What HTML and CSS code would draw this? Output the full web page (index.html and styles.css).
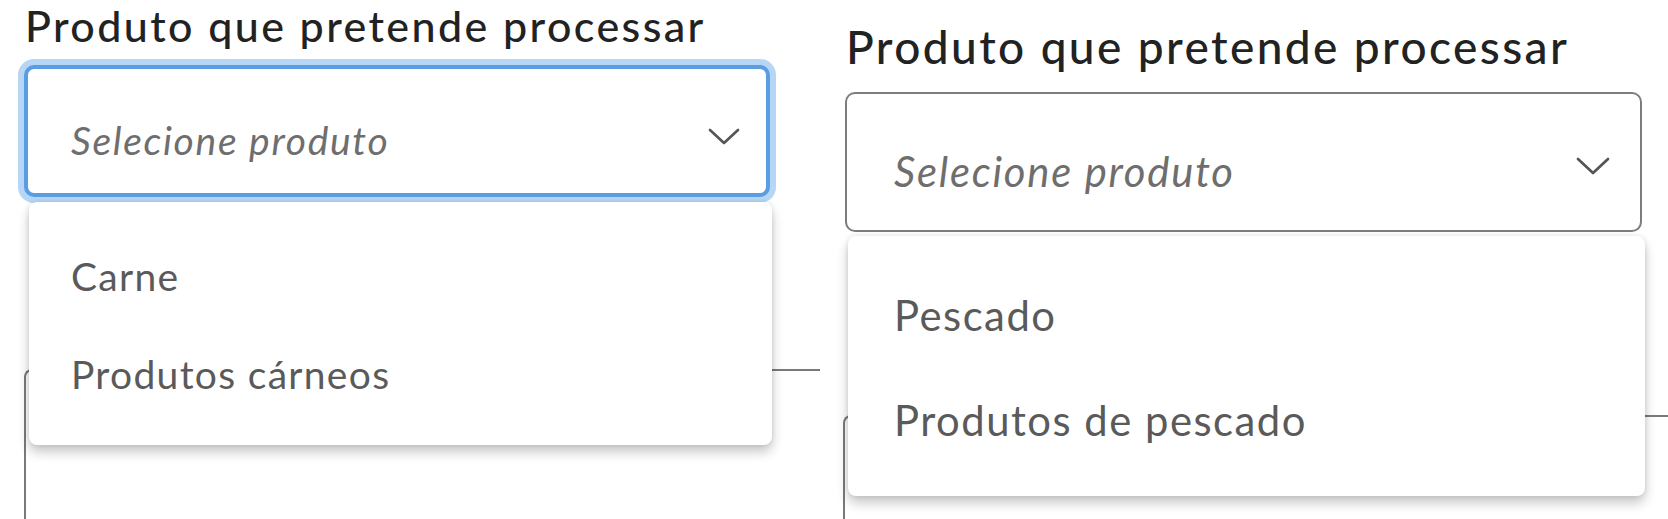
FILE: index.html
```html
<!DOCTYPE html>
<html lang="pt">
<head>
<meta charset="utf-8">
<title>Produto</title>
<link rel="stylesheet" href="styles.css">
</head>
<body>
<div class="page">
  <section class="panel panel-a">
    <h2 class="label">Produto que pretende processar</h2>
    <div class="select-wrap">
      <div class="select focused">
        <span class="placeholder">Selecione produto</span>
        <svg class="chev" viewBox="0 0 32 17" width="32" height="17"><polyline points="2,2 16,15 30,2" fill="none" stroke="#555" stroke-width="2.6" stroke-linecap="round" stroke-linejoin="round"/></svg>
      </div>
      <ul class="menu">
        <li class="item">Carne</li>
        <li class="item">Produtos cárneos</li>
      </ul>
    </div>
    <div class="field"></div>
  </section>
  <section class="panel panel-b">
    <h2 class="label">Produto que pretende processar</h2>
    <div class="select-wrap">
      <div class="select">
        <span class="placeholder">Selecione produto</span>
        <svg class="chev" viewBox="0 0 34 18" width="34" height="18"><polyline points="2,2 17,16 32,2" fill="none" stroke="#555" stroke-width="2.7" stroke-linecap="round" stroke-linejoin="round"/></svg>
      </div>
      <ul class="menu">
        <li class="item">Pescado</li>
        <li class="item">Produtos de pescado</li>
      </ul>
    </div>
    <div class="field"></div>
  </section>
</div>
</body>
</html>
```
FILE: styles.css
```css
* { box-sizing: border-box; }
html, body { margin: 0; padding: 0; background: #fff; }
body { font-family: Lato, "Open Sans", sans-serif; }
.page { display: flex; width: 1668px; height: 519px; overflow: hidden; }
.panel { height: 519px; overflow: hidden; }
.label { margin: 0; color: #222; font-weight: 500; white-space: nowrap; }
.select-wrap { position: relative; }
.select {
  display: flex; align-items: center; background: #fff;
}
.placeholder { flex: 1; font-style: italic; color: #6e6e6e; white-space: nowrap; }
.chev { flex: none; display: block; }
.menu {
  position: absolute; z-index: 2; margin: 0; list-style: none;
  background: #fff; border-radius: 8px;
  box-shadow: 0 7px 12px rgba(0,0,0,0.22), 0 0 5px rgba(0,0,0,0.10);
}
.item { color: #5a5a5a; white-space: nowrap; }
.field { border-top: 2px solid #7a7a7a; border-left: 2px solid #7a7a7a; border-top-left-radius: 8px; height: 300px; width: 1000px; }

/* panel A */
.panel-a { width: 820px; padding-left: 24px; }
.panel-a .label { font-size: 43px; line-height: 52px; padding-left: 1px; letter-spacing: 2.4px; }
.panel-a .select-wrap { margin-top: 13px; }
.panel-a .select {
  width: 746px; height: 132px; border: 4px solid #5b9de3; border-radius: 10px;
  box-shadow: 0 0 0 6px #b7d6f6; padding: 0 26px 0 43px;
}
.panel-a .placeholder { font-size: 39px; margin-top: 18px; letter-spacing: 1.7px; }
.panel-a .chev { margin-top: 10px; }
.panel-a .menu { top: calc(100% + 5px); left: 5px; width: 743px; height: 243px; padding: 25px 0 22px; }
.panel-a .item { height: 98px; line-height: 98px; padding-left: 42px; font-size: 39px; letter-spacing: 1.3px; }
.panel-a .field { margin-top: 172px; }

/* panel B */
.panel-b { flex: 1; padding-left: 25px; padding-top: 21px; }
.panel-b .label { font-size: 46px; line-height: 51px; padding-left: 1px; letter-spacing: 2.4px; }
.panel-b .select-wrap { margin-top: 20px; }
.panel-b .select {
  width: 797px; height: 140px; border: 2px solid #7d7d7d; border-radius: 10px;
  padding: 0 30px 0 47px;
}
.panel-b .placeholder { font-size: 41.8px; margin-top: 18px; letter-spacing: 1.8px; }
.panel-b .chev { margin-top: 8px; }
.panel-b .menu { top: calc(100% + 4px); left: 3px; width: 797px; height: 260px; padding: 27px 0 23px; }
.panel-b .item { height: 105px; line-height: 105px; padding-left: 46px; font-size: 41.8px; letter-spacing: 1.5px; }
.panel-b .field { margin-top: 183px; margin-left: -2px; }
```
